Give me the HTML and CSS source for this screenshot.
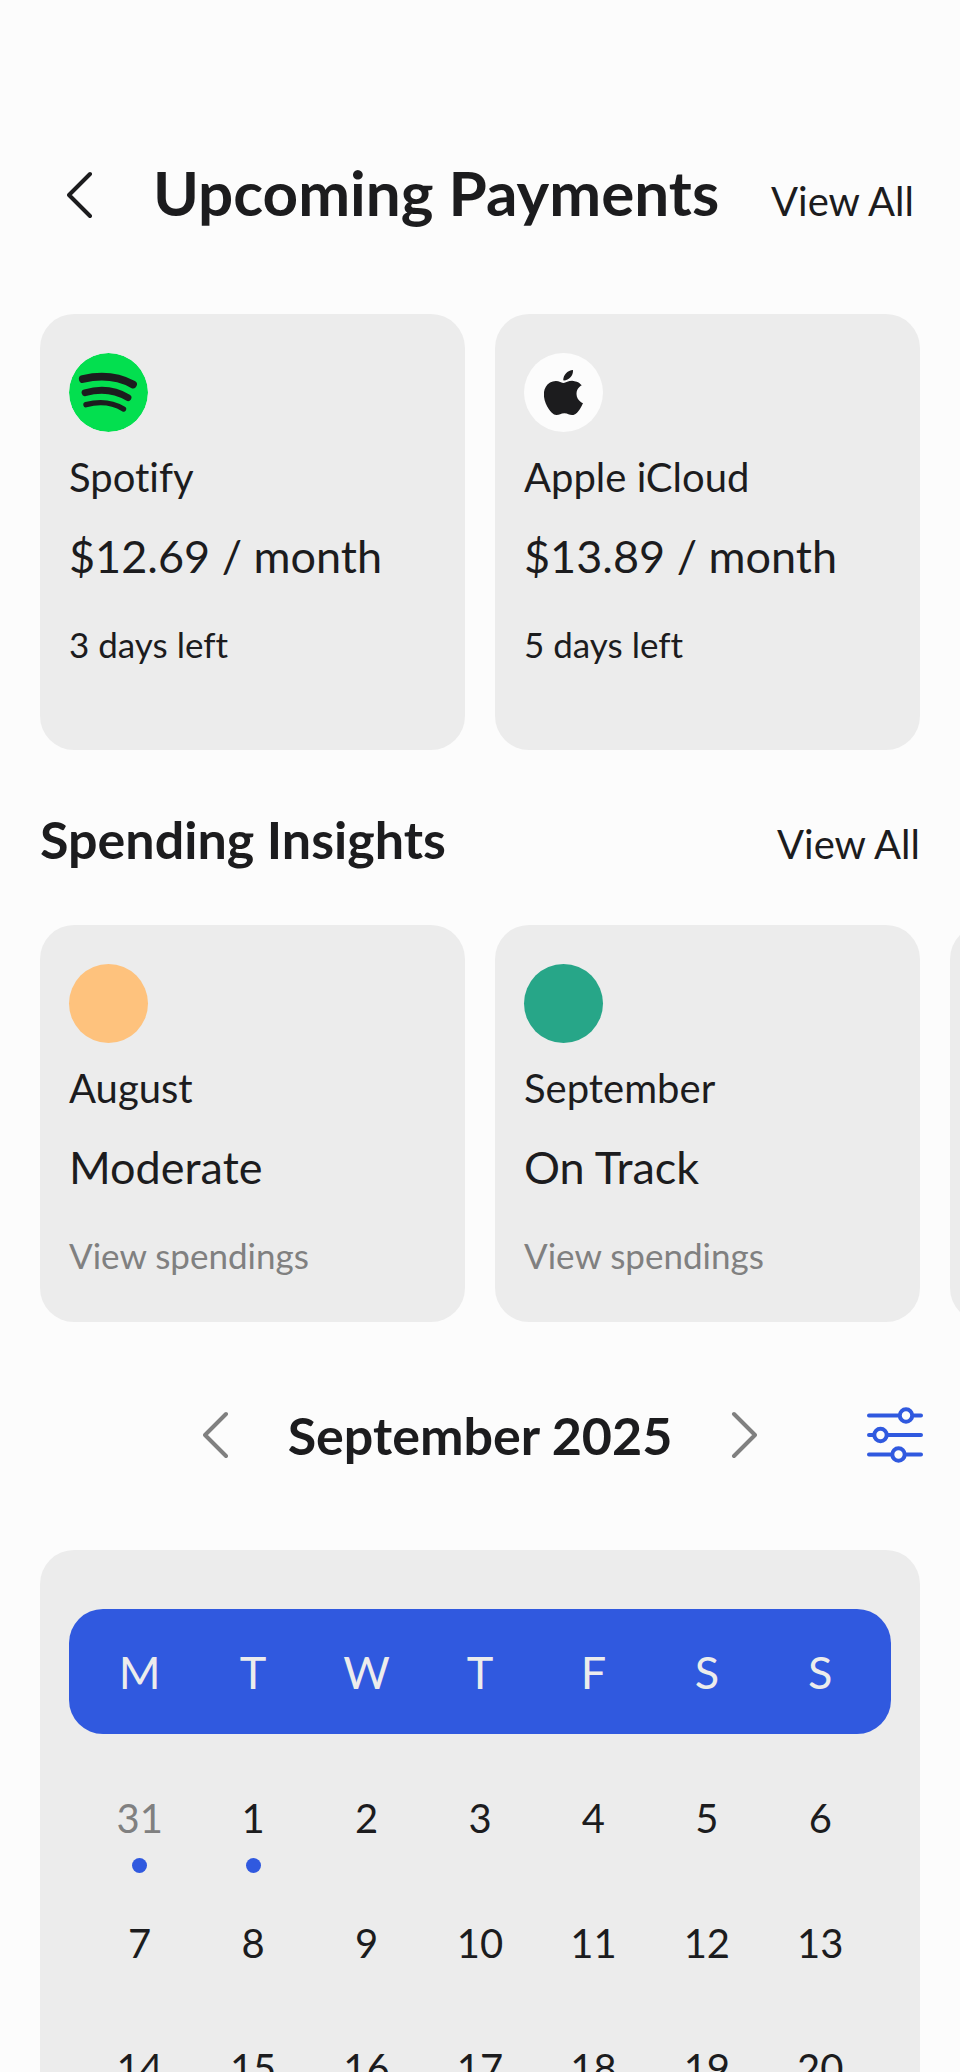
FILE: index.html
```html
<!DOCTYPE html>
<html lang="en">
<head>
<meta charset="utf-8">
<meta name="viewport" content="width=device-width, initial-scale=1">
<title>Upcoming Payments</title>
<link rel="stylesheet" href="styles.css">
</head>
<body>
<main class="screen">
  <header class="header">
    <button class="icon-button" type="button" aria-label="Back">
      <svg class="chevron" viewBox="0 0 26 48" aria-hidden="true"><path d="M23 3 2 24l21 21"/></svg>
    </button>
    <h1 class="title">Upcoming Payments</h1>
    <a class="view-all" href="#payments">View All</a>
  </header>

  <section class="cards" id="payments">
    <article class="card card-payment">
      <svg class="badge" viewBox="0 0 79 79" aria-hidden="true">
        <circle cx="39.500" cy="39.500" r="39.500" fill="#03df4f"/>
        <g fill="none" stroke="#1c1c1e" stroke-linecap="round">
          <path stroke-width="7.800" d="M13.800 26Q42 19.500 64 31.500"/>
          <path stroke-width="6.800" d="M16 39.700Q40 33 59 44.700"/>
          <path stroke-width="5.400" d="M17 51.700Q38 46 54.500 56"/>
        </g>
      </svg>
      <h3 class="name">Spotify</h3>
      <p class="value">$12.69 / month</p>
      <p class="note">3 days left</p>
    </article>
    <article class="card card-payment">
      <div class="badge badge-light">
        <svg class="apple" viewBox="2.300 0 19.500 24" preserveAspectRatio="none" aria-hidden="true"><path fill="#1c1c1e" d="M12.152 6.896c-.948 0-2.415-1.078-3.960-1.040-2.040.027-3.910 1.183-4.961 3.014-2.117 3.675-.546 9.103 1.519 12.090 1.013 1.454 2.208 3.090 3.792 3.039 1.520-.065 2.090-.987 3.935-.987 1.831 0 2.350.987 3.960.948 1.637-.026 2.676-1.480 3.676-2.948 1.156-1.688 1.636-3.325 1.662-3.415-.039-.013-3.182-1.221-3.220-4.857-.026-3.040 2.480-4.494 2.597-4.559-1.429-2.090-3.623-2.324-4.390-2.376-2-.156-3.675 1.090-4.610 1.090zM15.530 3.830c.843-1.012 1.400-2.427 1.245-3.830-1.207.052-2.662.805-3.532 1.818-.780.896-1.454 2.338-1.273 3.714 1.338.104 2.715-.688 3.559-1.701"/></svg>
      </div>
      <h3 class="name">Apple iCloud</h3>
      <p class="value">$13.89 / month</p>
      <p class="note">5 days left</p>
    </article>
  </section>

  <div class="section-head">
    <h2 class="section-title">Spending Insights</h2>
    <a class="view-all" href="#insights">View All</a>
  </div>

  <section class="cards" id="insights">
    <article class="card">
      <div class="badge badge-moderate"></div>
      <h3 class="name">August</h3>
      <p class="value">Moderate</p>
      <a class="note note-link" href="#august">View spendings</a>
    </article>
    <article class="card">
      <div class="badge badge-on-track"></div>
      <h3 class="name">September</h3>
      <p class="value">On Track</p>
      <a class="note note-link" href="#september">View spendings</a>
    </article>
    <article class="card"></article>
  </section>

  <div class="month-bar">
    <div class="month-nav">
      <button class="icon-button muted" type="button" aria-label="Previous month">
        <svg class="chevron" viewBox="0 0 26 48" aria-hidden="true"><path d="M23 3 2 24l21 21"/></svg>
      </button>
      <h2 class="section-title">September 2025</h2>
      <button class="icon-button muted" type="button" aria-label="Next month">
        <svg class="chevron" viewBox="0 0 26 48" aria-hidden="true"><path d="M3 3l21 21L3 45"/></svg>
      </button>
    </div>
    <button class="icon-button filter" type="button" aria-label="Filter">
      <svg class="sliders" viewBox="0 0 56 56" aria-hidden="true">
        <path d="M2 8.500h52M2 28h52M2 47.500h52"/>
        <circle cx="39" cy="8.500" r="6.200"/>
        <circle cx="13.500" cy="28" r="6.200"/>
        <circle cx="31.500" cy="47.500" r="6.200"/>
      </svg>
    </button>
  </div>

  <section class="calendar">
    <table class="month">
      <thead>
        <tr class="week weekdays"><th>M</th><th>T</th><th>W</th><th>T</th><th>F</th><th>S</th><th>S</th></tr>
      </thead>
      <tbody>
        <tr class="week"><td class="event outside">31</td><td class="event">1</td><td>2</td><td>3</td><td>4</td><td>5</td><td>6</td></tr>
        <tr class="week"><td>7</td><td>8</td><td>9</td><td>10</td><td>11</td><td>12</td><td>13</td></tr>
        <tr class="week"><td>14</td><td>15</td><td>16</td><td>17</td><td>18</td><td>19</td><td>20</td></tr>
      </tbody>
    </table>
  </section>
</main>
</body>
</html>
```
FILE: styles.css
```css
* {
  box-sizing: border-box;
}

body {
  margin: 0;
  background: #fcfcfc;
  color: #1c1c1e;
  font-family: Lato, "Liberation Sans", sans-serif;
  font-variant-ligatures: none;
}

h1, h2, h3, p {
  margin: 0;
}

a {
  color: inherit;
  text-decoration: none;
}

.screen {
  height: 100vh;
  overflow: hidden;
  padding-top: 156px;
}

.header {
  display: flex;
  align-items: baseline;
  padding: 0 46px 0 67px;
  margin-bottom: 86px;
}

.header .icon-button {
  align-self: center;
  padding-top: 6px;
  margin-right: 60px;
}

.title {
  flex: 1;
  font-size: 62px;
  line-height: 72px;
  font-weight: 700;
  white-space: nowrap;
}

.view-all {
  font-size: 40px;
  line-height: 48px;
}

.icon-button {
  display: flex;
  padding: 0;
  border: 0;
  background: none;
  color: inherit;
  cursor: pointer;
}

.icon-button.muted {
  color: #808080;
}

.chevron {
  width: 26px;
  height: 48px;
  fill: none;
  stroke: currentColor;
  stroke-width: 4px;
  stroke-linecap: round;
  stroke-linejoin: round;
}

.cards {
  display: grid;
  grid-auto-flow: column;
  grid-auto-columns: calc((100% - 30px) / 2);
  gap: 30px;
  padding: 0 40px;
  overflow-x: auto;
  scrollbar-width: none;
}

.card {
  padding: 39px 29px 45px;
  border-radius: 34px;
  background: #ececec;
}

.card-payment {
  padding-bottom: 84px;
}

.badge {
  display: flex;
  align-items: center;
  justify-content: center;
  width: 79px;
  height: 79px;
  margin-bottom: 21px;
  border-radius: 50%;
}

.badge-light {
  background: #fcfcfc;
}

.badge-moderate {
  background: #fec27d;
}

.badge-on-track {
  background: #27a688;
}

.apple {
  width: 39px;
  height: 45px;
}

.name {
  font-size: 40px;
  line-height: 48px;
  font-weight: 400;
}

.value {
  margin-top: 28px;
  font-size: 45px;
  line-height: 54px;
}

.note {
  display: block;
  margin-top: 39px;
  font-size: 35px;
  line-height: 44px;
}

.note-link {
  color: #808080;
}

.section-head {
  display: flex;
  align-items: baseline;
  justify-content: space-between;
  padding: 0 40px;
  margin: 60px 0 57px;
}

.section-title {
  font-size: 52px;
  line-height: 58px;
  font-weight: 700;
}

.month-bar {
  display: grid;
  grid-template-columns: 1fr 554px 1fr;
  align-items: center;
  margin: 84px 0 86px;
}

.month-nav {
  grid-column: 2;
  display: flex;
  align-items: center;
  justify-content: space-between;
}

.filter {
  justify-self: end;
  margin-right: 37px;
}

.sliders {
  width: 56px;
  height: 56px;
  fill: #fcfcfc;
  stroke: #3059df;
  stroke-width: 4px;
  stroke-linecap: round;
}

.calendar {
  margin: 0 40px;
  padding: 59px 29px;
  border-radius: 34px;
  background: #ececec;
}

.month,
.month thead,
.month tbody {
  display: block;
}

.month tbody {
  padding-top: 60px;
}

.week {
  display: grid;
  grid-template-columns: repeat(7, 1fr);
  height: 125px;
  padding: 0 14px;
  text-align: center;
}

.week th,
.week td {
  padding: 0;
}

.weekdays {
  align-items: center;
  border-radius: 34px;
  background: #3059df;
  color: #ececec;
}

.weekdays th {
  font-size: 45px;
  line-height: 54px;
  font-weight: 400;
}

.week td {
  font-size: 40px;
  line-height: 48px;
}

.event::after {
  content: "";
  display: block;
  width: 15px;
  height: 15px;
  margin: 16px auto 0;
  border-radius: 50%;
  background: #3059df;
}

.outside {
  color: #808080;
}
```
